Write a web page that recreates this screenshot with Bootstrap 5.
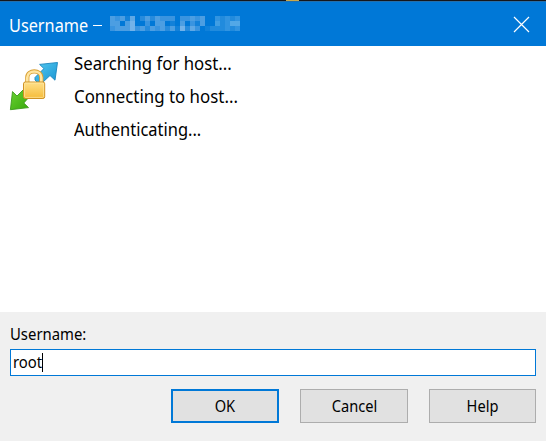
<!DOCTYPE html>
<html lang="en">
<head>
<meta charset="utf-8">
<meta name="viewport" content="width=device-width, initial-scale=1">
<title>Username</title>
<link href="https://cdn.jsdelivr.net/npm/bootstrap@5.3.0/dist/css/bootstrap.min.css" rel="stylesheet">
<style>
body{font-family:"Noto Sans","Open Sans",sans-serif;color:#000;font-size:17px;overflow:hidden}
.dialog{width:546px;height:441px}
.topline{height:1px;background:linear-gradient(90deg,#16171b 286px,#c9a94b 286px 299px,#16171b 299px)}
.titlebar{height:45px;background:#0078d7;box-shadow:inset 0 1px #246fac;padding:1px 16px 0 9px}
.titlebar svg,.log svg{display:block;flex:none}
.cap{width:84px;font-size:17.5px;line-height:24px;padding-top:2px;transform:scaleX(.93)}
.dash{width:9px;height:1px;background:#fff;margin-top:3px}
.txt{display:inline-block;transform-origin:0 50%;white-space:nowrap}
.mosaic{margin-left:8px;margin-top:-1px}
.log{height:266px;padding:1px 9px}
.log-lines{padding-left:16px}
.log-lines div{height:33px;line-height:32px;font-size:18px}
.log-lines .txt{transform:scaleX(.932)}
.log-lines div:nth-child(2) .txt{transform:scaleX(.937)}
.log-lines div:last-child .txt{transform:scaleX(.914)}
.prompt{background:#f0f0f0;padding:10px 10px 0}
.prompt label{line-height:24px;height:27px}
.prompt .txt{transform:scaleX(.875)}
.field{height:27px;border:1px solid #0078d7;background:#fff;padding:0 2px;line-height:23px}
.field .txt{padding-bottom:2px}
.caret{width:1px;height:19px;background:#000;margin-left:-4px}
.actions{gap:21px;margin-top:13px}
.actions .btn{width:108px;height:34px;border:1px solid #adadad;border-radius:0;background:#e1e1e1;color:#000;padding:0;font-size:17px;line-height:32px}
.actions .btn:last-child{width:107px}
.actions .btn.default{border:2px solid #0078d7;line-height:30px}
.actions .txt{transform-origin:50% 50%;transform:scaleX(.86)}
</style>
</head>
<body>
<div class="dialog d-flex flex-column">
  <div class="topline"></div>
  <header class="titlebar d-flex align-items-center text-white">
    <span class="cap txt">Username</span>
    <span class="dash"></span>
    <svg class="mosaic" id="mosaic" width="130" height="15" shape-rendering="crispEdges"></svg>
    <span class="flex-grow-1"></span>
    <svg width="17" height="17"><path d="M1 1L16 16M16 1L1 16" stroke="#fff" stroke-width="1.2"/></svg>
  </header>
  <main class="log d-flex bg-white">
    <svg width="49" height="66" viewBox="9 47 49 66">
      <defs>
        <linearGradient id="blue" x1="0" y1="0" x2="1" y2="1"><stop offset="0" stop-color="#55caf0"/><stop offset="1" stop-color="#1793d2"/></linearGradient>
        <linearGradient id="green" x1="0" y1="0" x2="1" y2="1"><stop offset="0" stop-color="#6bd332"/><stop offset="1" stop-color="#36a70b"/></linearGradient>
        <linearGradient id="gold" x1="0" y1="0" x2="0" y2="1"><stop offset="0" stop-color="#ffe08a"/><stop offset="1" stop-color="#f5bb38"/></linearGradient>
      </defs>
      <path d="M57.5 62.5L39.6 64.4L43.9 68.6L35 77.5V80L38 83L42 83L50 75.5L55 80.2Z" fill="url(#blue)" stroke="#1c86bd" stroke-width=".9" stroke-linejoin="round"/>
      <path d="M10.4 109.7L12.5 91.6L17 96L23.5 89.5L30 96L23.8 103L28.5 107.6Z" fill="url(#green)" stroke="#3c9b1c" stroke-width=".9" stroke-linejoin="round"/>
      <path d="M27.3 83V77.5C27.3 69.4 41.3 69.4 41.3 77.5V83" fill="none" stroke="#d9a033" stroke-width="4.2"/>
      <path d="M27.3 83V77.5C27.3 69.4 41.3 69.4 41.3 77.5V83" fill="none" stroke="#ffe5a0" stroke-width="2.6"/>
      <rect x="23.5" y="82" width="21.2" height="16.5" rx="1.8" fill="url(#gold)" stroke="#cf9224"/>
      <rect x="24.6" y="83.1" width="19" height="14.3" rx="1" fill="none" stroke="#ffe9ac" stroke-width=".8" opacity=".8"/>
    </svg>
    <div class="log-lines">
      <div><span class="txt">Searching for host...</span></div>
      <div><span class="txt">Connecting to host...</span></div>
      <div><span class="txt">Authenticating...</span></div>
    </div>
  </main>
  <section class="prompt flex-grow-1">
    <label class="d-block"><span class="txt">Username:</span></label>
    <div class="field d-flex align-items-center"><span class="txt">root</span><span class="caret"></span></div>
    <div class="actions d-flex justify-content-end">
      <button class="btn default"><span class="txt">OK</span></button>
      <button class="btn"><span class="txt">Cancel</span></button>
      <button class="btn"><span class="txt">Help</span></button>
    </div>
  </section>
</div>
<script src="https://cdn.jsdelivr.net/npm/bootstrap@5.3.0/dist/js/bootstrap.bundle.min.js"></script>
<script>
// Pixelated host address: each digit is the white level of one 5px cell
const rows = ["43415024243330334340032323",
              "44046003044010403140042355",
              "34446342434241625301222323"];
const svg = document.getElementById("mosaic");
rows.forEach((row, y) => [...row].forEach((v, x) => {
  const r = document.createElementNS("http://www.w3.org/2000/svg", "rect");
  const a = {x: x * 5, y: y * 5, width: 5, height: 5, fill: x > 18 ? "#b5e2fa" : "#d2e3f7", "fill-opacity": v * 0.09};
  for (const k in a) r.setAttribute(k, a[k]);
  svg.appendChild(r);
}));
</script>
</body>
</html>
